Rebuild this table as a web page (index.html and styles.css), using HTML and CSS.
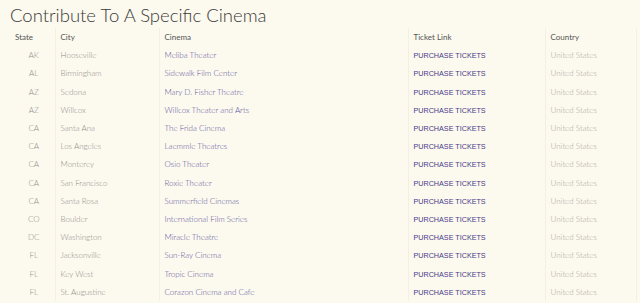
FILE: index.html
```html
<!DOCTYPE html>
<html>
<head>
<meta charset="utf-8">
<link rel="stylesheet" href="styles.css">
</head>
<body>
<h1 class="title">Contribute To A Specific Cinema</h1>
<table class="cinemas">
<colgroup><col class="w-state"><col class="w-city"><col class="w-cinema"><col class="w-link"><col class="w-country"></colgroup>
<thead>
<tr><th class="c-state">State</th><th class="c-city">City</th><th class="c-cinema">Cinema</th><th class="c-link">Ticket Link</th><th class="c-country">Country</th></tr>
</thead>
<tbody>
<tr><td class="c-state">AK</td><td class="c-city">Hooseville</td><td class="c-cinema">Meliba Theater</td><td class="c-link"><a href="#">PURCHASE TICKETS</a></td><td class="c-country">United States</td></tr>
<tr><td class="c-state">AL</td><td class="c-city">Birmingham</td><td class="c-cinema">Sidewalk Film Center</td><td class="c-link"><a href="#">PURCHASE TICKETS</a></td><td class="c-country">United States</td></tr>
<tr><td class="c-state">AZ</td><td class="c-city">Sedona</td><td class="c-cinema">Mary D. Fisher Theatre</td><td class="c-link"><a href="#">PURCHASE TICKETS</a></td><td class="c-country">United States</td></tr>
<tr><td class="c-state">AZ</td><td class="c-city">Willcox</td><td class="c-cinema">Willcox Theater and Arts</td><td class="c-link"><a href="#">PURCHASE TICKETS</a></td><td class="c-country">United States</td></tr>
<tr><td class="c-state">CA</td><td class="c-city">Santa Ana</td><td class="c-cinema">The Frida Cinema</td><td class="c-link"><a href="#">PURCHASE TICKETS</a></td><td class="c-country">United States</td></tr>
<tr><td class="c-state">CA</td><td class="c-city">Los Angeles</td><td class="c-cinema">Laemmle Theatres</td><td class="c-link"><a href="#">PURCHASE TICKETS</a></td><td class="c-country">United States</td></tr>
<tr><td class="c-state">CA</td><td class="c-city">Monterey</td><td class="c-cinema">Osio Theater</td><td class="c-link"><a href="#">PURCHASE TICKETS</a></td><td class="c-country">United States</td></tr>
<tr><td class="c-state">CA</td><td class="c-city">San Francisco</td><td class="c-cinema">Roxie Theater</td><td class="c-link"><a href="#">PURCHASE TICKETS</a></td><td class="c-country">United States</td></tr>
<tr><td class="c-state">CA</td><td class="c-city">Santa Rosa</td><td class="c-cinema">Summerfield Cinemas</td><td class="c-link"><a href="#">PURCHASE TICKETS</a></td><td class="c-country">United States</td></tr>
<tr><td class="c-state">CO</td><td class="c-city">Boulder</td><td class="c-cinema">International Film Series</td><td class="c-link"><a href="#">PURCHASE TICKETS</a></td><td class="c-country">United States</td></tr>
<tr><td class="c-state">DC</td><td class="c-city">Washington</td><td class="c-cinema">Miracle Theatre</td><td class="c-link"><a href="#">PURCHASE TICKETS</a></td><td class="c-country">United States</td></tr>
<tr><td class="c-state">FL</td><td class="c-city">Jacksonville</td><td class="c-cinema">Sun-Ray Cinema</td><td class="c-link"><a href="#">PURCHASE TICKETS</a></td><td class="c-country">United States</td></tr>
<tr><td class="c-state">FL</td><td class="c-city">Key West</td><td class="c-cinema">Tropic Cinema</td><td class="c-link"><a href="#">PURCHASE TICKETS</a></td><td class="c-country">United States</td></tr>
<tr><td class="c-state">FL</td><td class="c-city">St. Augustine</td><td class="c-cinema">Corazon Cinema and Cafe</td><td class="c-link"><a href="#">PURCHASE TICKETS</a></td><td class="c-country">United States</td></tr>
</tbody>
</table>
</body>
</html>
```
FILE: styles.css
```css
html, body {
  margin: 0;
  padding: 0;
  background: #fcf9ee;
  font-family: "Lato", "Liberation Sans", sans-serif;
  overflow: hidden;
}
body {
  padding: 3px 0 0 10px;
}
.title {
  margin: 0;
  font-family: "Lato", sans-serif;
  font-weight: 300;
  font-size: 18.5px;
  line-height: 24px;
  color: #3a3a3a;
}
.cinemas {
  border-collapse: collapse;
  table-layout: fixed;
  width: 631px;
  margin-left: -5px;
  margin-top: 1px;
  font-size: 8px;
}
.w-state { width: 50px; }
.w-city { width: 104px; }
.w-cinema { width: 249px; }
.w-link { width: 137px; }
.w-country { width: 91px; }
.cinemas th, .cinemas td {
  height: 18.2px;
  padding: 0 0 0 5px;
  text-align: left;
  vertical-align: middle;
  white-space: nowrap;
  overflow: hidden;
  border-right: 1px solid #f3efe1;
}
.cinemas th {
  font-weight: 400;
  color: #555;
  font-size: 8px;
}
.cinemas th.c-state { padding-left: 10px; }
.cinemas td {
  color: #8f8e8c;
  font-weight: 300;
}
.cinemas td.c-state {
  text-align: center;
  padding-left: 8px;
}
.cinemas td.c-cinema { color: #5a529d; }
.cinemas td.c-country { color: #a8a6a2; }
.c-link a {
  font-family: "Liberation Sans", sans-serif;
  color: #473c8b;
  text-decoration: none;
  font-size: 7.2px;
}
```
